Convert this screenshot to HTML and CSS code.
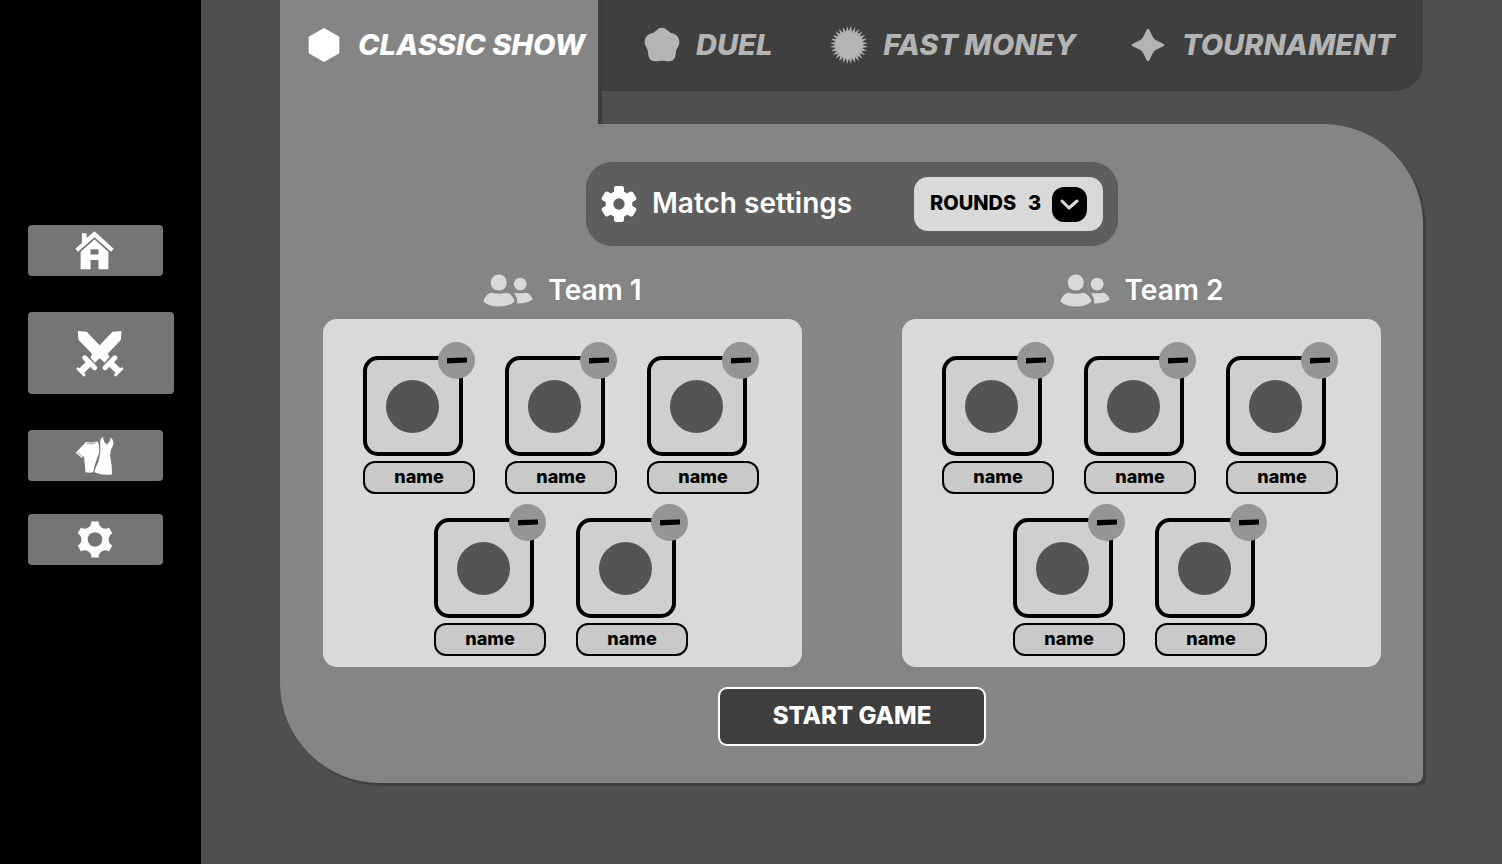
FILE: index.html
```html
<!DOCTYPE html>
<html lang="en">

<head>
    <meta charset="UTF-8">
    <meta name="viewport" content="width=device-width, initial-scale=1">
    <title>Classic show</title>
    <link rel="stylesheet" href="styles.css">
</head>

<body>
    <!-- shared icons -->
    <svg class="sprite" aria-hidden="true">
        <symbol id="minus" viewBox="0 0 20 7">
            <path d="M0 1L20 .5V5.500L0 6.500Z" />
        </symbol>
        <symbol id="people" viewBox="519 43 152 99">
            <circle cx="567" cy="68" r="24.500" />
            <circle cx="632" cy="73" r="19.500" />
            <path d="M520 126Q528 100 545 99Q567 105 590 99Q608 102 615 126Q598 141 567 141Q536 141 520 126Z" />
            <path d="M612 99Q632 103 650 99Q665 102 670 120Q655 132 622 132Q626 114 612 99Z" />
        </symbol>
    </svg>

    <div class="app">
        <nav class="sidebar">
            <a href="#" class="side-link" aria-label="Home">
                <svg width="39" height="39" viewBox="226 92 118 118">
                    <path d="M247 99H261V113L285 93L343 146L335 155L285 111L235 155L227 146L247 128Z" />
                    <path fill-rule="evenodd" d="M285 118L327 155V208H297V180H273V208H243V155ZM273 147V163H297V147Z" />
                </svg>
            </a>
            <a href="#" class="side-link active" aria-label="Play">
                <svg width="48" height="47" viewBox="230 388 144 142">
                    <path d="M235 391L262 393L301 434L340 393L367 391L365 418L325 460L331 469L316 487L301 473L286 487L273 471L278 460L237 418Z" />
                    <g class="hilt">
                        <path d="M256 472L286 502" />
                        <path class="grip" d="M271 487L244 514" />
                        <path class="pommel" d="M235 505L254 524" />
                        <path d="M347 472L317 502" />
                        <path class="grip" d="M332 487L359 514" />
                        <path class="pommel" d="M368 505L349 524" />
                    </g>
                </svg>
            </a>
            <a href="#" class="side-link" aria-label="Outfits">
                <svg width="39" height="40" viewBox="226 106 118 120">
                    <path d="M260 123Q277 128 292 121L297 127Q301 150 298 160Q288 182 281 215Q268 218 258 215L253 166L247 172L228 156Z" />
                    <path d="M302 127Q302 112 311 108Q311 123 322 131Q334 123 333 110Q344 117 342 132Q332 148 332 165Q338 190 338 221Q312 226 285 215Q286 205 296 185Q305 160 302 127Z" />
                    <path class="seam" d="M232 153L250 169M262 128Q277 132 291 126" />
                </svg>
            </a>
            <a href="#" class="side-link" aria-label="Settings">
                <svg width="36" height="37" viewBox="-54 -55 108 110">
                    <path fill-rule="evenodd" d="M-11 -54H11A20 20 0 0 0 42 -36L52 -18A20 20 0 0 0 52 18L42 36A20 20 0 0 0 11 54H-11A20 20 0 0 0 -42 36L-52 18A20 20 0 0 0 -52 -18L-42 -36A20 20 0 0 0 -11 -54ZM22 0A22 22 0 1 0 -22 0A22 22 0 1 0 22 0Z" />
                </svg>
            </a>
        </nav>

        <main class="content">
            <nav class="tabs">
                <a href="#" class="tab current">
                    <svg class="tab-icon" viewBox="-57 -57 114 114">
                        <path class="rounded" d="M0 -48L43 -23V23L0 48L-43 23V-23Z" />
                    </svg>
                    <span>CLASSIC SHOW</span>
                </a>
                <div class="tab-bar">
                    <a href="#" class="tab">
                        <svg class="tab-icon" viewBox="-57 -57 114 114">
                            <path d="M0 -52C13 -52 17 -42 26 -37C35 -34 52 -31 52 -8C52 5 43 9 42 21C41 33 39 49 20 49C11 49 8 47 0 47C-8 47 -11 49 -20 49C-39 49 -41 33 -42 21C-43 9 -52 5 -52 -8C-52 -31 -35 -34 -26 -37C-17 -42 -13 -52 0 -52Z" />
                        </svg>
                        <span>DUEL</span>
                    </a>
                    <a href="#" class="tab">
                        <svg class="tab-icon" viewBox="-57 -57 114 114">
                            <defs>
                                <path id="ray" d="M-5 -38L0 -57L5 -38Z" />
                                <g id="rays">
                                    <use href="#ray" transform="rotate(6)" />
                                    <use href="#ray" transform="rotate(19)" />
                                    <use href="#ray" transform="rotate(32)" />
                                    <use href="#ray" transform="rotate(45)" />
                                    <use href="#ray" transform="rotate(58)" />
                                    <use href="#ray" transform="rotate(71)" />
                                    <use href="#ray" transform="rotate(84)" />
                                </g>
                            </defs>
                            <circle r="40" />
                            <use href="#rays" />
                            <use href="#rays" transform="rotate(90)" />
                            <use href="#rays" transform="rotate(180)" />
                            <use href="#rays" transform="rotate(270)" />
                        </svg>
                        <span>FAST MONEY</span>
                    </a>
                    <a href="#" class="tab">
                        <svg class="tab-icon" viewBox="-57 -57 114 114">
                            <path d="M-4 -46Q0 -52 4 -46L15 -23Q18 -18 23 -15L46 -4Q52 0 46 4L23 15Q18 18 15 23L4 46Q0 52 -4 46L-15 23Q-18 18 -23 15L-46 4Q-52 0 -46 -4L-23 -15Q-18 -18 -15 -23Z" />
                        </svg>
                        <span>TOURNAMENT</span>
                    </a>
                </div>
            </nav>

            <form class="panel" action="#">
                <div class="match">
                    <svg class="match-icon" width="36" height="36" viewBox="-54 -54 108 108">
                        <circle r="40" />
                        <rect x="-15" y="-54" width="30" height="108" rx="7" />
                        <rect x="-15" y="-54" width="30" height="108" rx="7" transform="rotate(60)" />
                        <rect x="-15" y="-54" width="30" height="108" rx="7" transform="rotate(120)" />
                        <circle class="hole" r="17" />
                    </svg>
                    <h1>Match settings</h1>
                    <div class="rounds">
                        <label for="rounds">ROUNDS</label>
                        <div class="picker">
                            <select id="rounds" name="rounds">
                                <option>1</option>
                                <option>2</option>
                                <option selected>3</option>
                                <option>4</option>
                                <option>5</option>
                            </select>
                            <svg class="chevron" width="35" height="35" viewBox="0 0 35 35">
                                <rect width="35" height="35" rx="12" />
                                <path d="M10 14L17 21L25 14" />
                            </svg>
                        </div>
                    </div>
                </div>

                <div class="teams">
                    <section>
                        <h2><svg width="50" height="33"><use href="#people" /></svg>Team 1</h2>
                        <div class="players">
                            <div class="player">
                                <div class="avatar"></div>
                                <button type="button" class="remove" aria-label="Remove player"><svg width="20" height="7"><use href="#minus" /></svg></button>
                                <input type="text" value="name" aria-label="Player name">
                            </div>
                            <div class="player">
                                <div class="avatar"></div>
                                <button type="button" class="remove" aria-label="Remove player"><svg width="20" height="7"><use href="#minus" /></svg></button>
                                <input type="text" value="name" aria-label="Player name">
                            </div>
                            <div class="player">
                                <div class="avatar"></div>
                                <button type="button" class="remove" aria-label="Remove player"><svg width="20" height="7"><use href="#minus" /></svg></button>
                                <input type="text" value="name" aria-label="Player name">
                            </div>
                            <div class="player">
                                <div class="avatar"></div>
                                <button type="button" class="remove" aria-label="Remove player"><svg width="20" height="7"><use href="#minus" /></svg></button>
                                <input type="text" value="name" aria-label="Player name">
                            </div>
                            <div class="player">
                                <div class="avatar"></div>
                                <button type="button" class="remove" aria-label="Remove player"><svg width="20" height="7"><use href="#minus" /></svg></button>
                                <input type="text" value="name" aria-label="Player name">
                            </div>
                        </div>
                    </section>
                    <section>
                        <h2><svg width="50" height="33"><use href="#people" /></svg>Team 2</h2>
                        <div class="players">
                            <div class="player">
                                <div class="avatar"></div>
                                <button type="button" class="remove" aria-label="Remove player"><svg width="20" height="7"><use href="#minus" /></svg></button>
                                <input type="text" value="name" aria-label="Player name">
                            </div>
                            <div class="player">
                                <div class="avatar"></div>
                                <button type="button" class="remove" aria-label="Remove player"><svg width="20" height="7"><use href="#minus" /></svg></button>
                                <input type="text" value="name" aria-label="Player name">
                            </div>
                            <div class="player">
                                <div class="avatar"></div>
                                <button type="button" class="remove" aria-label="Remove player"><svg width="20" height="7"><use href="#minus" /></svg></button>
                                <input type="text" value="name" aria-label="Player name">
                            </div>
                            <div class="player">
                                <div class="avatar"></div>
                                <button type="button" class="remove" aria-label="Remove player"><svg width="20" height="7"><use href="#minus" /></svg></button>
                                <input type="text" value="name" aria-label="Player name">
                            </div>
                            <div class="player">
                                <div class="avatar"></div>
                                <button type="button" class="remove" aria-label="Remove player"><svg width="20" height="7"><use href="#minus" /></svg></button>
                                <input type="text" value="name" aria-label="Player name">
                            </div>
                        </div>
                    </section>
                </div>

                <button type="submit" class="start">START GAME</button>
            </form>
        </main>
    </div>
</body>

</html>
```
FILE: styles.css
```css
* {
    margin: 0;
    padding: 0;
    box-sizing: border-box;
}

body {
    font-family: Inter, "Liberation Sans", sans-serif;
    background-color: #4f4f4f;
    color: white;
}

a {
    color: inherit;
    text-decoration: none;
}

button,
input,
select {
    font: inherit;
    color: inherit;
}

.sprite {
    display: none;
}

.app {
    display: flex;
    min-height: 100vh;
}

/* sidebar */
.sidebar {
    flex: none;
    display: flex;
    flex-direction: column;
    gap: 33px;
    width: 201px;
    padding: 225px 27px 0 28px;
    background-color: black;
}

.side-link {
    display: flex;
    align-items: center;
    justify-content: center;
    width: 135px;
    height: 51px;
    padding-right: 2px;
    border-radius: 4px;
    background-color: #757575;
    fill: white;
}

.side-link.active {
    width: 146px;
    height: 82px;
    margin: 3px 0;
}

.hilt {
    fill: none;
    stroke: white;
    stroke-width: 15;
    stroke-linecap: round;
}

.hilt .grip {
    stroke-width: 20;
    stroke-linecap: butt;
}

.hilt .pommel {
    stroke-width: 8;
}

.seam {
    fill: none;
    stroke: #757575;
    stroke-width: 2;
}

/* tabs */
.content {
    flex: 1;
    padding: 0 79px 80px;
}

.tabs {
    display: flex;
    align-items: flex-start;
}

.tab {
    display: flex;
    align-items: center;
    gap: 15px;
    height: 90px;
    font-size: 29px;
    font-weight: 800;
    font-style: italic;
    white-space: nowrap;
    color: #b4b4b4;
    fill: #b4b4b4;
}

.tab span {
    padding-bottom: 2px;
}

.tab-icon {
    flex: none;
    width: 38px;
    height: 38px;
}

.tab.current {
    position: relative;
    flex: none;
    width: 318px;
    height: 124px;
    padding: 0 0 34px 25px;
    background-color: #858585;
    box-shadow: 4px 0 #3c3c3c;
    color: white;
    fill: white;
}

.rounded {
    stroke: white;
    stroke-width: 6;
    stroke-linejoin: round;
}

.tab-bar {
    flex: 1;
    display: grid;
    grid-template-columns: 188fr 300fr 264fr;
    height: 91px;
    padding: 0 28px 0 45px;
    border-radius: 0 0 28px 0;
    background-color: #3f3f3f;
}

/* panel */
.panel {
    position: relative;
    display: flex;
    flex-direction: column;
    align-items: center;
    padding: 38px 42px 37px 43px;
    border-radius: 0 100px 8px 100px;
    background-color: #858585;
    box-shadow: 3px 3px 1px #3f3f3f;
}

.match {
    display: flex;
    align-items: center;
    gap: 15px;
    width: 532px;
    height: 84px;
    padding: 0 15px;
    border-radius: 26px;
    background-color: #5e5e5e;
}

.match-icon {
    fill: white;
}

.match-icon .hole {
    fill: #5e5e5e;
}

h1,
h2 {
    font-size: 28px;
    font-weight: 600;
    line-height: 38px;
}

h1 {
    padding-bottom: 2px;
}

.rounds {
    display: flex;
    align-items: center;
    justify-content: space-between;
    width: 189px;
    height: 54px;
    margin-left: auto;
    padding: 0 16px;
    border-radius: 14px;
    background-color: #d9d9d9;
    color: black;
    font-size: 20px;
    font-weight: 800;
}

.rounds label,
.rounds select {
    padding-bottom: 2px;
}

.picker {
    position: relative;
    display: flex;
}

.picker select {
    appearance: none;
    width: 59px;
    height: 35px;
    border: none;
    background: none;
}

.chevron {
    position: absolute;
    right: 0;
    top: 0;
    pointer-events: none;
}

.chevron path {
    fill: none;
    stroke: #d9d9d9;
    stroke-width: 3;
    stroke-linecap: round;
    stroke-linejoin: round;
}

/* teams */
.teams {
    display: grid;
    grid-template-columns: 1fr 1fr;
    gap: 100px;
    width: 100%;
    margin: 25px 0 20px;
}

h2 {
    display: flex;
    align-items: center;
    justify-content: center;
    gap: 15px;
    margin-bottom: 10px;
    fill: #d9d9d9;
}

.players {
    display: flex;
    flex-wrap: wrap;
    justify-content: center;
    gap: 10px 30px;
    padding: 23px 23px 11px 20px;
    border-radius: 14px;
    background-color: #d9d9d9;
    color: black;
}

.player {
    position: relative;
    width: 112px;
    padding-top: 14px;
}

.avatar {
    display: flex;
    align-items: center;
    justify-content: center;
    width: 100px;
    height: 100px;
    padding-right: 1px;
    border: 4px solid black;
    border-radius: 15px;
    background-color: #cfcfcf;
}

.avatar::before {
    content: "";
    width: 53px;
    height: 53px;
    border-radius: 50%;
    background-color: #545454;
}

.remove {
    position: absolute;
    top: 0;
    right: 0;
    display: flex;
    align-items: center;
    justify-content: center;
    width: 37px;
    height: 37px;
    border: none;
    border-radius: 50%;
    background-color: #959595;
}

.player input {
    display: block;
    width: 100%;
    height: 33px;
    margin-top: 5px;
    padding-bottom: 3px;
    border: 2px solid black;
    border-radius: 12px;
    background-color: #c9c9c9;
    font-size: 18px;
    font-weight: 800;
    text-align: center;
}

.start {
    width: 268px;
    height: 59px;
    padding-bottom: 3px;
    border: 2px solid white;
    border-radius: 9px;
    background-color: #3f3f3f;
    font-size: 24px;
    font-weight: 800;
}
```
